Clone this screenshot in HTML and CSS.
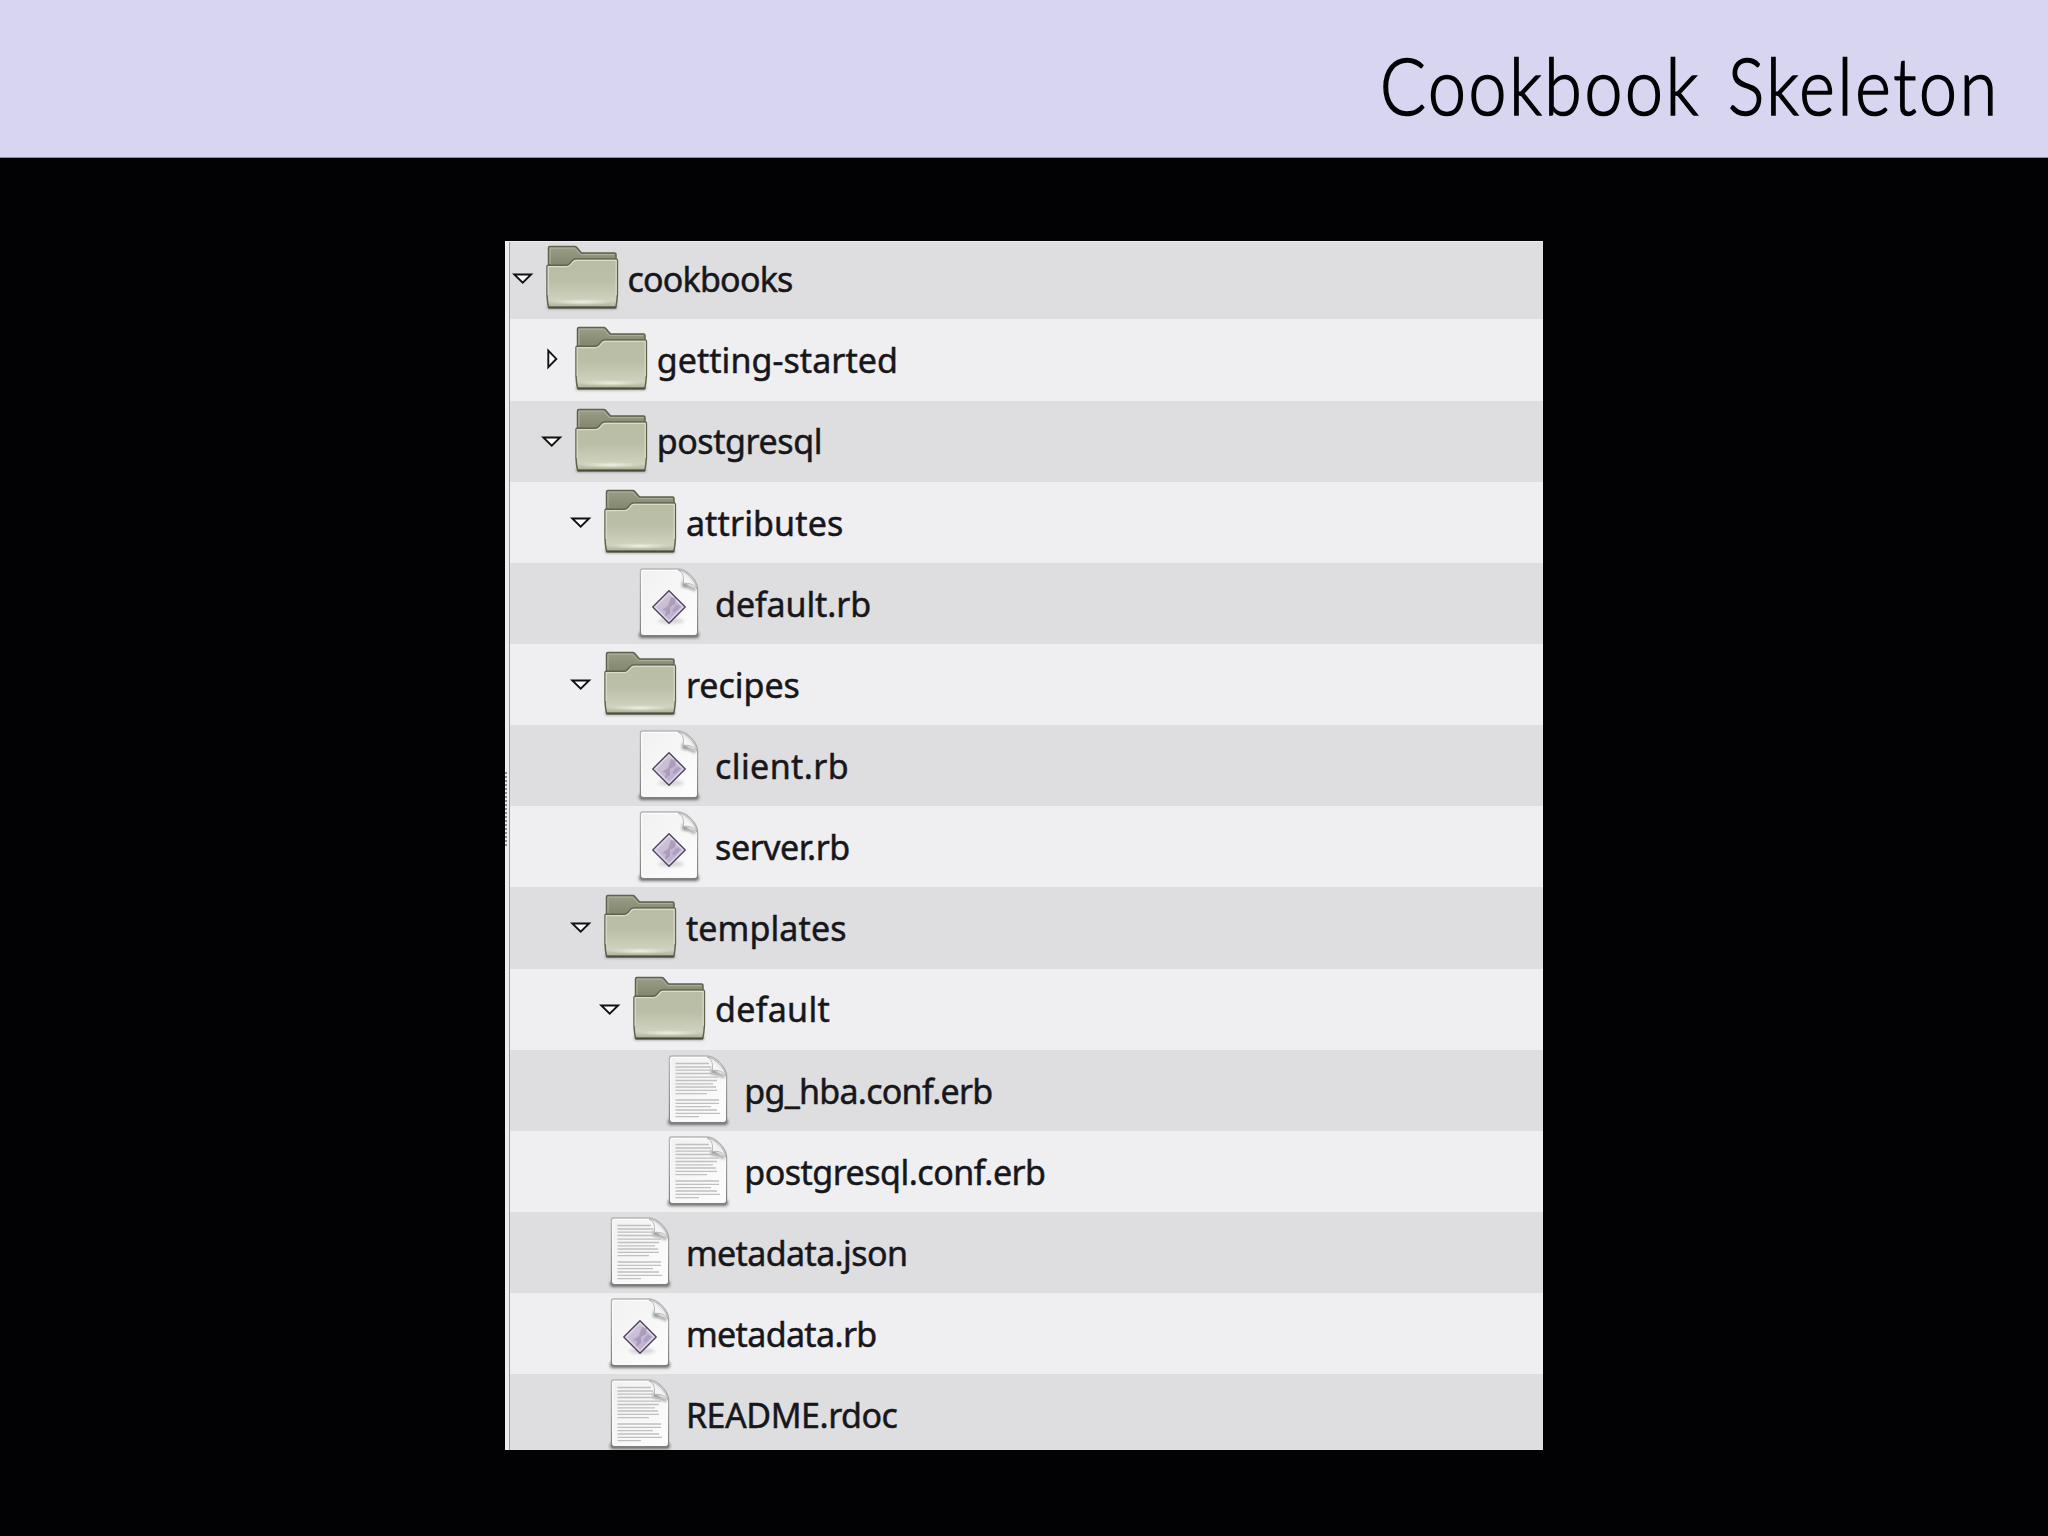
FILE: index.html
```html
<!DOCTYPE html>
<html lang="en">
<head>
<meta charset="utf-8">
<title>Cookbook Skeleton</title>
<link rel="stylesheet" href="styles.css">
</head>
<body>
<svg class="defs" aria-hidden="true">
  <defs>
    <linearGradient id="gBack" x1="0" y1="0" x2="0" y2="1"><stop offset="0" stop-color="#9b9e86"/><stop offset=".3" stop-color="#85886f"/></linearGradient>
    <linearGradient id="gFront" x1="0" y1="0" x2="0" y2="1"><stop offset="0" stop-color="#b9bda4"/><stop offset=".45" stop-color="#bbbfa7"/><stop offset=".86" stop-color="#cfd2be"/><stop offset="1" stop-color="#a9ad94"/></linearGradient>
    <radialGradient id="gGlow" cx=".5" cy=".5" r=".5"><stop offset="0" stop-color="#eef0e2"/><stop offset="1" stop-color="#eef0e2" stop-opacity="0"/></radialGradient>
    <linearGradient id="gPaper" x1="0" y1="0" x2="1" y2="1"><stop offset="0" stop-color="#f1f1f1"/><stop offset="1" stop-color="#fdfdfd"/></linearGradient>
    <linearGradient id="gEdge" x1="0" y1="0" x2="0" y2="1"><stop offset="0" stop-color="#b4b4b4"/><stop offset="1" stop-color="#808080"/></linearGradient>
    <linearGradient id="gCurl" x1="0" y1="1" x2="1" y2="0"><stop offset="0" stop-color="#fff"/><stop offset=".5" stop-color="#f4f4f4"/><stop offset="1" stop-color="#c4c4c4"/></linearGradient>
    <linearGradient id="gGem" x1="0" y1="0" x2="1" y2="1"><stop offset="0" stop-color="#d8cfe0"/><stop offset="1" stop-color="#b5a4c6"/></linearGradient>
    <filter id="soft" x="-20%" y="-200%" width="140%" height="500%"><feGaussianBlur stdDeviation="1.5"/></filter>
  </defs>
  <symbol id="open" viewBox="0 0 24 81"><path d="M3.300 36.500H20.100L11.700 44.700Z" fill="#fff" stroke="#111" stroke-width="1.900"/></symbol>
  <symbol id="closed" viewBox="0 0 24 81"><path d="M8.300 31.600V48.200L16.300 39.900Z" fill="#fff" stroke="#111" stroke-width="1.900"/></symbol>
  <symbol id="folder" viewBox="0 0 78 81">
    <rect x="4" y="67" width="70" height="4" rx="2" fill="#555" opacity=".6" filter="url(#soft)"/>
    <path d="M5.500 66V10Q5.500 8.500 7 8.500H31.500Q33 8.500 34 9.700L38.500 15H71.500Q73 15 73 16.500V66Z" fill="url(#gBack)" stroke="#5f624e" stroke-width="1.500"/>
    <path d="M7 26V10.200H31.500L37.500 16.600H71.500" fill="none" stroke="#aeb19a"/>
    <path d="M4 28.500Q4 27.300 5 27.300H23Q25 27.300 26.300 26L29.500 22.500Q30.700 21 32.500 21H73Q74.400 21 74.400 22.500V57Q74 64 72.800 69.500H5.700Q4.200 64 4 57Z" fill="url(#gFront)" stroke="#5f624e" stroke-width="1.500"/>
    <ellipse cx="39" cy="64" rx="31" ry="3" fill="url(#gGlow)"/>
    <path d="M5.200 57V28.700H23.500Q26 28.700 27.500 26.800L30.500 23.500Q31.500 22.400 33 22.400H73.200V57" fill="none" stroke="#dadcca" stroke-width="1.200"/>
    <path d="M5.600 69.500H72.800" stroke="#4a4c3c" stroke-width="2"/>
  </symbol>
  <symbol id="page" viewBox="0 0 78 81">
    <rect x="9" y="69" width="60" height="6" rx="3" fill="#444" opacity=".75" filter="url(#soft)"/>
    <path d="M10.500 8Q10.500 6 12.500 6H48C56 6 67.500 17 67.500 26V70Q67.500 72.500 65 72.500H13Q10.500 72.500 10.500 70Z" fill="url(#gPaper)" stroke="url(#gEdge)" stroke-width="1.400"/>
    <path d="M11.700 9Q11.700 7.400 13 7.400H48C54 8 66 18 66.300 27V69.700Q66.300 71.300 64.700 71.300H13.300Q11.700 71.300 11.700 69.700Z" fill="none" stroke="#fff"/>
    <path d="M53 17Q56 23 66 25.500L65 28Q58 24 52 24Z" fill="#555" opacity=".7" filter="url(#soft)"/>
    <path d="M48 7C54 10 53.500 14 53.500 20.500C59.500 19.500 65 22 66.700 26C65.500 17.500 57 8.500 48 7Z" fill="url(#gCurl)" stroke="#b0b0b0" stroke-width=".9"/>
  </symbol>
  <symbol id="text" viewBox="0 0 78 81">
    <use href="#page"/>
    <path d="M16.500 13.500H50M16.500 17H52M16.500 20.200H52M16.500 23.500H56M16.500 27.200H60M16.500 30.500H58M16.500 33.800H54M16.500 37H57M16.500 40.300H58M16.500 43.600H48M16.500 50H60M16.500 53.300H60M16.500 56.600H52M16.500 60H58M16.500 63.300H61M16.500 66.600H40" stroke="#c0c0c0" stroke-width="1.300"/>
  </symbol>
  <symbol id="ruby" viewBox="0 0 78 81">
    <use href="#page"/>
    <ellipse cx="41" cy="58" rx="13" ry="3" fill="#999" opacity=".35" filter="url(#soft)"/>
    <path d="M39 27.800L55.200 44L39 60.200L22.800 44Z" fill="url(#gGem)" stroke="#51465f" stroke-width="1.500" stroke-linejoin="round"/>
    <path d="M39 30L53 44L39 58L25 44Z" fill="none" stroke="#e4dceb" stroke-width="1.200"/>
    <path d="M41 34L46 35L45 41L40 44L40 50L35 54L36 48L32 47L38 43Z" fill="#8f7fa3" opacity=".5"/>
    <path d="M46 42L51 43L45 49L42 48Z" fill="#8f7fa3" opacity=".4"/>
  </symbol>
</svg>
<header class="banner"><h1 class="title fit" data-width="721">Cookbook Skeleton</h1></header>
<main class="stage">
  <div class="panel">
    <div class="gutter"><div class="grip"></div></div>
    <ul class="tree">
      <li class="row d0"><svg class="arrow"><use href="#open"/></svg><svg class="icon"><use href="#folder"/></svg><span class="label fit" data-width="165">cookbooks</span></li>
      <li class="row d1"><svg class="arrow"><use href="#closed"/></svg><svg class="icon"><use href="#folder"/></svg><span class="label fit" data-width="241">getting-started</span></li>
      <li class="row d1"><svg class="arrow"><use href="#open"/></svg><svg class="icon"><use href="#folder"/></svg><span class="label fit" data-width="165">postgresql</span></li>
      <li class="row d2"><svg class="arrow"><use href="#open"/></svg><svg class="icon"><use href="#folder"/></svg><span class="label fit" data-width="157.500">attributes</span></li>
      <li class="row d3"><svg class="arrow"></svg><svg class="icon"><use href="#ruby"/></svg><span class="label fit" data-width="156">default.rb</span></li>
      <li class="row d2"><svg class="arrow"><use href="#open"/></svg><svg class="icon"><use href="#folder"/></svg><span class="label fit" data-width="114">recipes</span></li>
      <li class="row d3"><svg class="arrow"></svg><svg class="icon"><use href="#ruby"/></svg><span class="label fit" data-width="133.500">client.rb</span></li>
      <li class="row d3"><svg class="arrow"></svg><svg class="icon"><use href="#ruby"/></svg><span class="label fit" data-width="135">server.rb</span></li>
      <li class="row d2"><svg class="arrow"><use href="#open"/></svg><svg class="icon"><use href="#folder"/></svg><span class="label fit" data-width="161">templates</span></li>
      <li class="row d3"><svg class="arrow"><use href="#open"/></svg><svg class="icon"><use href="#folder"/></svg><span class="label fit" data-width="115">default</span></li>
      <li class="row d4"><svg class="arrow"></svg><svg class="icon"><use href="#text"/></svg><span class="label fit" data-width="248">pg_hba.conf.erb</span></li>
      <li class="row d4"><svg class="arrow"></svg><svg class="icon"><use href="#text"/></svg><span class="label fit" data-width="301.500">postgresql.conf.erb</span></li>
      <li class="row d2"><svg class="arrow"></svg><svg class="icon"><use href="#text"/></svg><span class="label fit" data-width="221">metadata.json</span></li>
      <li class="row d2"><svg class="arrow"></svg><svg class="icon"><use href="#ruby"/></svg><span class="label fit" data-width="191">metadata.rb</span></li>
      <li class="row d2"><svg class="arrow"></svg><svg class="icon"><use href="#text"/></svg><span class="label fit" data-width="212">README.rdoc</span></li>
    </ul>
  </div>
</main>
<script src="fit.js"></script>
</body>
</html>
```
FILE: styles.css
```css
* { box-sizing: border-box; }
body {
  margin: 0;
  width: 2048px;
  height: 1536px;
  overflow: hidden;
  background: #020103;
  display: flex;
  flex-direction: column;
}
.defs { position: absolute; width: 0; height: 0; }
.banner {
  flex: none;
  height: 158px;
  padding: 37px 48px 0 0;
  background: #d8d5f1;
  border-bottom: 1px solid #8f8da0;
  display: flex;
  justify-content: flex-end;
  align-items: flex-start;
}
.title {
  margin: 0;
  font: 300 79px/96px Lato, sans-serif;
  color: #020204;
  white-space: pre;
  word-spacing: 7px;
  -webkit-text-stroke: 1.7px #020204;
  transform: scaleX(.86);
  transform-origin: 100% 50%;
}
.stage {
  flex: 1;
  display: flex;
  justify-content: center;
  align-items: flex-start;
  padding-top: 83px;
}
.panel {
  width: 1038px;
  height: 1209px;
  display: flex;
  overflow: hidden;
  background: #dedddf;
  border-top: 1px solid #efeeef;
}
.gutter {
  flex: none;
  width: 5px;
  padding-top: 530px;
  background: #efeeef;
  border-right: 1.500px solid #9c9a9b;
}
.grip {
  width: 2px;
  height: 76px;
  background: repeating-linear-gradient(#8a8a8a 0 2px, #efeeef 2px 4px);
}
.tree {
  flex: 1;
  margin: -3.700px 0 0;
  padding: 0;
  list-style: none;
}
.row {
  height: 81.150px;
  display: flex;
  background: #efeef0;
}
.row:nth-child(odd) { background: #dedddf; }
.d0 { padding-left: .500px; }
.d1 { padding-left: 29.700px; }
.d2 { padding-left: 58.900px; }
.d3 { padding-left: 88.100px; }
.d4 { padding-left: 117.300px; }
.arrow { flex: none; width: 24px; height: 81px; }
.icon { flex: none; width: 78px; height: 81px; margin: 0 6.800px 0 8.200px; }
.label {
  padding-top: .900px;
  font: 400 34px/81px "Noto Sans", sans-serif;
  color: #17171b;
  white-space: pre;
  -webkit-text-stroke: .5px #17171b;
}
```
FILE: fit.js
```js
// Spread each name to its set width through letter spacing.
document.querySelectorAll(".fit").forEach(function (el) {
  var gap = (Number(el.dataset.width) - el.offsetWidth) / el.textContent.length;
  el.style.letterSpacing = gap.toFixed(3) + "px";
});
```
